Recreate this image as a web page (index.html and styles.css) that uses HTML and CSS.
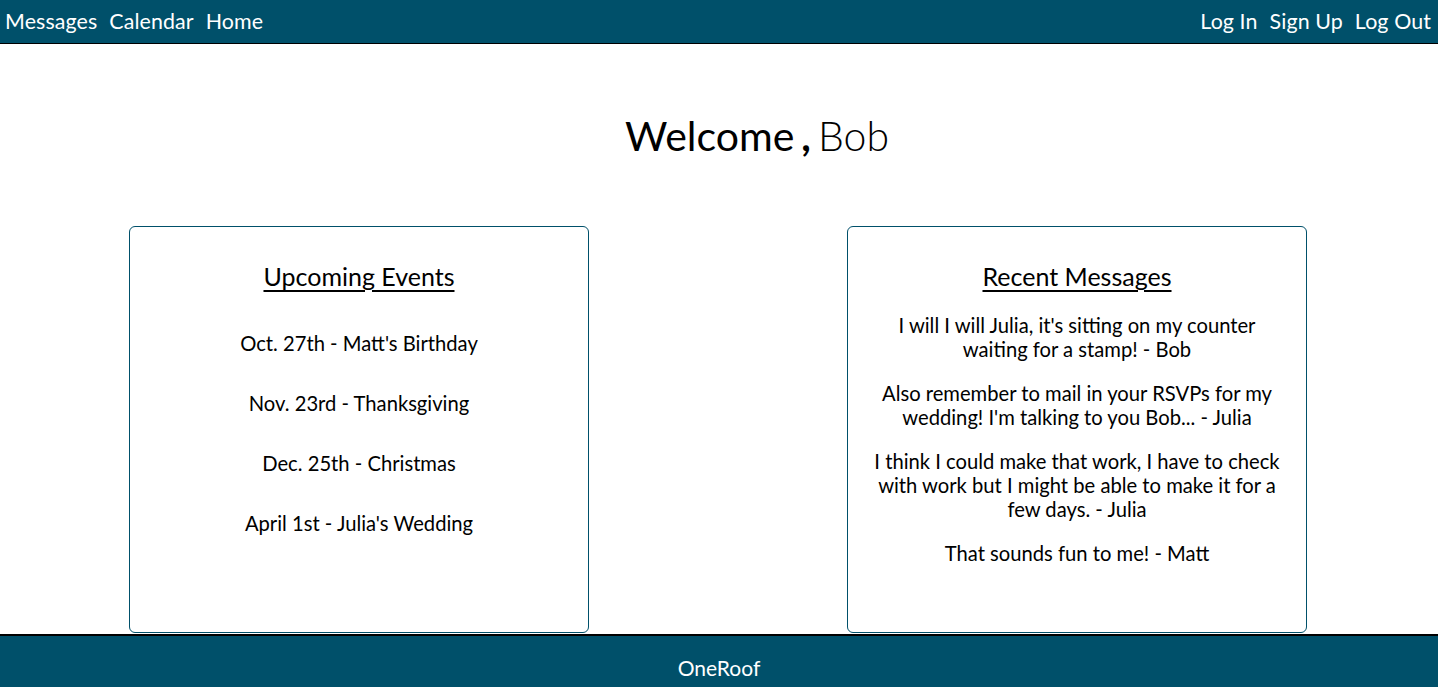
FILE: index.html
```html
<!DOCTYPE html>
<html>
<head>
<meta charset="utf-8">
<link rel="stylesheet" href="styles.css">
</head>
<body>
<nav class="topbar">
  <div class="nav-group">
    <a class="nav-link" href="#">Messages</a>
    <a class="nav-link" href="#">Calendar</a>
    <a class="nav-link" href="#">Home</a>
  </div>
  <div class="nav-group">
    <a class="nav-link" href="#">Log In</a>
    <a class="nav-link" href="#">Sign Up</a>
    <a class="nav-link" href="#">Log Out</a>
  </div>
</nav>
<main class="content">
  <h1 class="welcome"><span class="w-word">Welcome</span><span class="w-comma">,</span><span class="w-name">Bob</span></h1>
  <section class="cards">
    <div class="card">
      <h2 class="card-title">Upcoming Events</h2>
      <ul class="events">
        <li>Oct. 27th - Matt's Birthday</li>
        <li>Nov. 23rd - Thanksgiving</li>
        <li>Dec. 25th - Christmas</li>
        <li>April 1st - Julia's Wedding</li>
      </ul>
    </div>
    <div class="card">
      <h2 class="card-title">Recent Messages</h2>
      <div class="messages">
        <p>I will I will Julia, it's sitting on my counter waiting for a stamp! - Bob</p>
        <p>Also remember to mail in your RSVPs for my wedding! I'm talking to you Bob... - Julia</p>
        <p>I think I could make that work, I have to check with work but I might be able to make it for a few days. - Julia</p>
        <p>That sounds fun to me! - Matt</p>
      </div>
    </div>
  </section>
</main>
<footer class="footer">OneRoof</footer>
</body>
</html>
```
FILE: styles.css
```css
* { box-sizing: border-box; }
html, body { margin: 0; padding: 0; }
body {
  font-family: Lato, "Open Sans", sans-serif;
  color: #000;
  background: #fff;
  height: 687px;
  display: flex;
  flex-direction: column;
  overflow: hidden;
}
.topbar {
  height: 44px;
  background: #00506a;
  border-bottom: 1px solid #000;
  display: flex;
  justify-content: space-between;
  align-items: center;
  padding: 0 7px 2px 5px;
  flex-shrink: 0;
}
.nav-group { display: flex; gap: 12px; }
.nav-link {
  color: #fff;
  text-decoration: none;
  font-size: 21.4px;
  letter-spacing: 0.1px;
}
.content { flex: 1; display: flex; flex-direction: column; }
.welcome {
  margin: 68px 0 0;
  padding-left: 76px;
  text-align: center;
  font-size: 41px;
  line-height: 48px;
  font-weight: 400;
  height: 114px;
}
.w-word { font-weight: 400; }
.w-comma { font-weight: 700; margin: 0 7px 0 7px; }
.w-name { font-weight: 300; }
.cards {
  display: flex;
  justify-content: space-around;
  padding-right: 2px;
}
.card {
  width: 460px;
  height: 407px;
  border: 1px solid #00506a;
  border-radius: 6px;
  text-align: center;
  padding: 34px 20px 0;
}
.card-title {
  margin: 0;
  font-size: 25px;
  line-height: 30px;
  font-weight: 400;
  text-decoration: underline;
  text-underline-offset: 4px;
  text-decoration-thickness: 2px;
}
.events {
  list-style: none;
  margin: 40px 0 0;
  padding: 0;
  display: flex;
  flex-direction: column;
  gap: 36px;
}
.events li { font-size: 20.2px; line-height: 24px; }
.messages { margin-top: 22px; display: flex; flex-direction: column; gap: 20px; }
.messages p { margin: 0; font-size: 20.2px; line-height: 24px; }
.footer {
  height: 53px;
  background: #00506a;
  border-top: 2px solid #000;
  color: #fff;
  display: flex;
  align-items: center;
  justify-content: center;
  font-size: 21px;
  padding-top: 12px;
  flex-shrink: 0;
}
```
